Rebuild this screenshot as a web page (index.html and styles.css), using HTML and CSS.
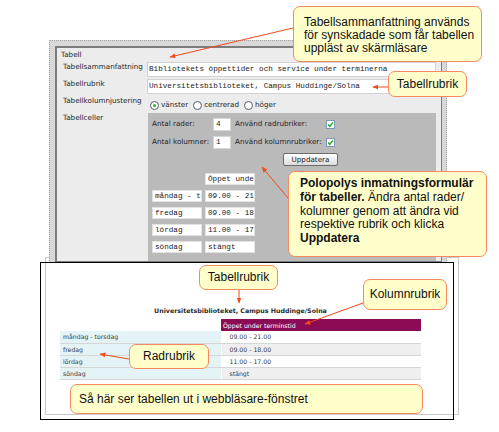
FILE: index.html
```html
<!DOCTYPE html>
<html lang="sv">
<head>
<meta charset="utf-8">
<title>Tabell</title>
<link rel="stylesheet" href="styles.css">
</head>
<body>
<div class="browser">
  <table class="tbl">
    <caption>Universitetsbiblioteket, Campus Huddinge/Solna</caption>
    <tr><td class="blank"></td><th class="colhead">Öppet under terminstid</th></tr>
    <tr><th class="rowhead">måndag - torsdag</th><td>09.00 - 21.00</td></tr>
    <tr class="alt"><th class="rowhead">fredag</th><td>09.00 - 18.00</td></tr>
    <tr><th class="rowhead">lördag</th><td>11.00 - 17.00</td></tr>
    <tr class="alt"><th class="rowhead">söndag</th><td>stängt</td></tr>
  </table>
</div>

<div class="form">
  <div class="panel">
    <div class="legend">Tabell</div>
    <div class="grid">
      <div class="label">Tabellsammanfattning</div>
      <div class="text-input">Bibliotekets öppettider och service under terminerna</div>
      <div class="label">Tabellrubrik</div>
      <div class="text-input">Universitetsbiblioteket, Campus Huddinge/Solna</div>
      <div class="label">Tabellkolumnjustering</div>
      <div class="radios">
        <span class="radio checked"></span><span class="rlabel">vänster</span>
        <span class="radio"></span><span class="rlabel">centrerad</span>
        <span class="radio"></span><span class="rlabel">höger</span>
      </div>
      <div class="label">Tabellceller</div>
      <div class="cellbox">
        <div class="setrow">
          <span class="setlabel">Antal rader:</span>
          <span class="num">4</span>
          <span class="chklabel">Använd radrubriker:</span>
          <span class="chk"><svg viewBox="0 0 9 9" width="9" height="9"><path d="M2 4.5 L3.8 6.5 L7 2.3" fill="none" stroke="#27a327" stroke-width="1.4"/></svg></span>
        </div>
        <div class="setrow">
          <span class="setlabel">Antal kolumner:</span>
          <span class="num">1</span>
          <span class="chklabel">Använd kolumnrubriker:</span>
          <span class="chk"><svg viewBox="0 0 9 9" width="9" height="9"><path d="M2 4.5 L3.8 6.5 L7 2.3" fill="none" stroke="#27a327" stroke-width="1.4"/></svg></span>
        </div>
        <div class="btnrow"><span class="btn">Uppdatera</span></div>
        <div class="cellgrid">
          <span></span><span class="cell">Öppet under terminstid</span>
          <span class="cell">måndag - torsdag</span><span class="cell">09.00 - 21.00</span>
          <span class="cell">fredag</span><span class="cell">09.00 - 18.00</span>
          <span class="cell">lördag</span><span class="cell">11.00 - 17.00</span>
          <span class="cell">söndag</span><span class="cell">stängt</span>
        </div>
      </div>
    </div>
  </div>
</div>

<div class="shot-frame"></div>

<div class="note n1">Tabellsammanfattning används<br>för synskadade som får tabellen<br>uppläst av skärmläsare</div>
<div class="note n2 center">Tabellrubrik</div>
<div class="note n3"><b>Polopolys inmatningsformulär<br>för tabeller.</b> Ändra antal rader/<br>kolumner genom att ändra vid<br>respektive rubrik och klicka<br><b>Uppdatera</b></div>
<div class="note n4 center">Tabellrubrik</div>
<div class="note n5 center">Kolumnrubrik</div>
<div class="note n6 center">Radrubrik</div>
<div class="note n7">Så här ser tabellen ut i webbläsare-fönstret</div>

<svg class="arrows" width="499" height="432" viewBox="0 0 499 432">
  <defs>
    <marker id="ah" viewBox="0 0 10 10" refX="9" refY="5" markerWidth="6" markerHeight="6" orient="auto" markerUnits="userSpaceOnUse">
      <path d="M0,1 L10,5 L0,9 z" fill="#f24a1c"/>
    </marker>
  </defs>
  <g stroke="#f24a1c" stroke-width="1" fill="none" marker-end="url(#ah)">
    <line x1="293" y1="28" x2="170" y2="57"/>
    <line x1="388" y1="87" x2="373" y2="87"/>
    <line x1="288" y1="198" x2="262" y2="167"/>
    <line x1="239" y1="290" x2="239" y2="303"/>
    <line x1="363" y1="303" x2="305" y2="324"/>
    <line x1="129" y1="359" x2="100" y2="354"/>
  </g>
</svg>
</body>
</html>
```
FILE: styles.css
```css
* { box-sizing: border-box; }

body {
  margin: 0;
  width: 499px;
  height: 432px;
  background: #ffffff;
  position: relative;
  overflow: hidden;
  font-family: "DejaVu Sans", Verdana, sans-serif;
  color: #333;
}

/* ---------- bottom: browser view ---------- */
.browser {
  position: absolute;
  left: 45px;
  top: 257px;
  width: 414px;
  height: 158px;
  border: 1px solid #c8c8c8;
  background: #fff;
  padding: 48px 0 0 14px;
}

.tbl {
  border-collapse: collapse;
  width: 361px;
  font-size: 6.2px;
  color: #3a3a3a;
}

.tbl caption {
  font-weight: bold;
  font-size: 6.3px;
  line-height: 10px;
  height: 13px;
  color: #2a2a2a;
}

.tbl th, .tbl td {
  height: 12px;
  padding: 0;
  text-align: left;
  font-weight: normal;
  line-height: 11px;
  border-bottom: 1px solid #d6d6d6;
}

.tbl td.blank { border-bottom: none; width: 161px; }

.tbl .colhead {
  background: #8b0c55;
  color: #fff;
  padding-left: 2px;
  border-bottom: none;
}

.tbl .rowhead {
  width: 161px;
  background: #e4f3f5;
  padding-left: 3px;
  border-right: 1px solid #fff;
}

.tbl td { padding-left: 8px; background: #fff; }
.tbl tr.alt td { background: #efefef; }

/* ---------- top: form ---------- */
.form {
  position: absolute;
  left: 49px;
  top: 40px;
  width: 398px;
  height: 223px;
  border: 1px dotted #a6a6a6;
  border-bottom: none;
  background: #d8d8d8;
  padding: 5px 4px 0 5px;
}

.panel {
  height: 100%;
  border: 2px solid #7c7c7c;
  border-right-width: 1px;
  background: #ececec;
  padding: 2px 0 0 4px;
  overflow: hidden;
}

.legend, .label, .rlabel, .setlabel, .chklabel, .btn {
  font-size: 7.2px;
  line-height: 10px;
  color: #1f1f2a;
}

.legend { height: 10px; margin-bottom: 2px; }

.grid {
  display: grid;
  grid-template-columns: 84px 289px;
  grid-template-rows: 15px 15px 15px 160px;
  row-gap: 2px;
  margin-left: 2px;
}

.label { align-self: start; white-space: nowrap; }

.text-input {
  background: #fff;
  border: 1px solid #d2d2d2;
  font-family: "Liberation Mono", "Courier New", monospace;
  font-size: 7.65px;
  line-height: 13px;
  padding-left: 1px;
  color: #222;
  white-space: nowrap;
  overflow: hidden;
}

.radios {
  display: flex;
  align-items: center;
  height: 10px;
  margin-top: 4px;
  padding-left: 3px;
}

.radio {
  width: 9px;
  height: 9px;
  border: 1px solid #4f5f70;
  border-radius: 50%;
  background: #fff;
  margin-right: 2px;
  display: flex;
  align-items: center;
  justify-content: center;
}

.radio.checked::after {
  content: "";
  width: 3px;
  height: 3px;
  border-radius: 50%;
  background: #2fae2f;
}

.rlabel { margin-right: 5px; }

.cellbox {
  background: #bababa;
  margin-left: 1px;
  padding: 4px 4px 0 4px;
}

.setrow {
  display: flex;
  align-items: center;
  height: 14px;
  margin-bottom: 4px;
}

.setlabel { width: 61px; white-space: nowrap; }

.num {
  width: 18px;
  height: 13px;
  background: #fff;
  border: 1px solid #d6d6d6;
  font-family: "Liberation Mono", monospace;
  font-size: 7.65px;
  line-height: 11px;
  padding-left: 2px;
  color: #222;
}

.chklabel { width: 91px; margin-left: 4px; white-space: nowrap; }

.chk {
  width: 9px;
  height: 9px;
  border: 1px solid #7d98b4;
  background: #fff;
  display: flex;
}

.chk svg { display: block; margin: -1px; }

.btnrow { display: flex; padding-left: 131px; height: 13px; }

.btn {
  width: 55px;
  height: 13px;
  border: 1px solid #6b6b6b;
  border-radius: 2px;
  background: linear-gradient(#ffffff, #dcdcdc);
  text-align: center;
  line-height: 11px;
  color: #222;
}

.cellgrid {
  display: grid;
  grid-template-columns: 50px 50px;
  grid-auto-rows: 12px;
  column-gap: 3px;
  row-gap: 5px;
  margin-top: 7px;
}

.cell {
  background: #fff;
  border: 1px solid #e2e2e2;
  font-family: "Liberation Mono", monospace;
  font-size: 7.65px;
  line-height: 10px;
  padding-left: 2px;
  color: #222;
  white-space: nowrap;
  overflow: hidden;
}

/* ---------- black frame over the browser view ---------- */
.shot-frame {
  position: absolute;
  left: 40px;
  top: 262px;
  width: 414px;
  height: 158px;
  border: 1px solid #000;
}

/* ---------- callouts ---------- */
.note {
  position: absolute;
  background: #ffffcc;
  border: 1.5px solid #f48a5e;
  border-radius: 7px;
  font-family: "Liberation Sans", Arial, sans-serif;
  font-size: 12px;
  line-height: 13px;
  color: #111;
  white-space: nowrap;
}

.note.center {
  display: flex;
  align-items: center;
  justify-content: center;
}

.n1 { left: 293px; top: 6px; width: 189px; height: 56px; padding: 9px 0 0 10px; }
.n2 { left: 388px; top: 71px; width: 79px; height: 26px; }
.n3 { left: 288px; top: 171px; width: 199px; height: 86px; padding: 5px 0 0 11px; line-height: 13.75px; }
.n4 { left: 199px; top: 265px; width: 79px; height: 25px; }
.n5 { left: 363px; top: 279px; width: 84px; height: 31px; }
.n6 { left: 129px; top: 344px; width: 80px; height: 25px; }
.n7 { left: 70px; top: 384px; width: 353px; height: 30px; padding: 8px 0 0 8px; }

.arrows {
  position: absolute;
  left: 0;
  top: 0;
  pointer-events: none;
}
```
